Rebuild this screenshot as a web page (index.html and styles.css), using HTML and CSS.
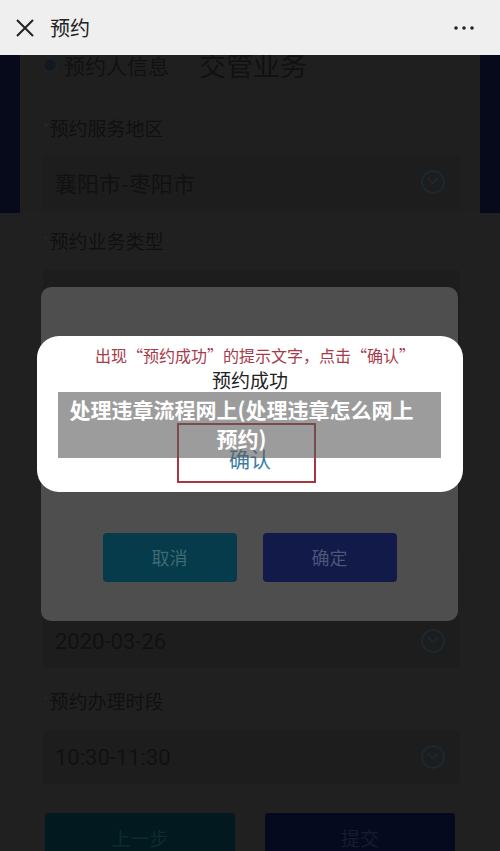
FILE: index.html
```html
<!DOCTYPE html>
<html lang="zh-CN">
<head>
  <meta charset="UTF-8" />
  <title>预约</title>
  <link rel="stylesheet" href="styles.css">
</head>
<body>

<div class="topbar">
  <svg class="close-icon" width="18" height="18" viewBox="0 0 18 18">
    <path d="M1 1 L17 17 M17 1 L1 17" stroke="#222" stroke-width="2" fill="none" />
  </svg>
  <span class="title">预约</span>
  <svg class="more-icon" width="22" height="6" viewBox="0 0 22 6">
    <circle cx="3" cy="3" r="1.8" fill="#222" />
    <circle cx="11" cy="3" r="1.8" fill="#222" />
    <circle cx="19" cy="3" r="1.8" fill="#222" />
  </svg>
</div>

<div class="shot">
  <div class="framed">
    <div class="tabs">
      <span class="radio"></span>
      <span class="tab">预约人信息</span>
      <span class="tab tab-big">交管业务</span>
    </div>

    <div class="label first"><i>*</i>预约服务地区</div>
    <div class="field">
      <span>襄阳市-枣阳市</span>
      <span class="chev"></span>
    </div>
  </div>

  <div class="lower">
    <div class="label second"><i>*</i>预约业务类型</div>
    <div class="field field-tall"></div>

    <div class="label"><i>*</i>预约日期</div>
    <div class="field">
      <span class="num">2020-03-26</span>
      <span class="chev"></span>
    </div>

    <div class="label"><i>*</i>预约办理时段</div>
    <div class="field">
      <span class="num">10:30-11:30</span>
      <span class="chev"></span>
    </div>

    <div class="steps">
      <div class="step prev">上一步</div>
      <div class="step submit">提交</div>
    </div>
  </div>

  <!-- dimmed confirm dialog from the original screen -->
  <div class="dialog">
    <div class="dialog-actions">
      <div class="dbtn cancel">取消</div>
      <div class="dbtn ok">确定</div>
    </div>
  </div>

  <!-- white popup pasted on top -->
  <div class="notice">
    <div class="hint">出现“预约成功”的提示文字，点击“确认”</div>
    <div class="success">预约成功</div>
    <div class="confirm-box">确认</div>
  </div>

  <div class="caption">处理违章流程网上(处理违章怎么网上预约)</div>
</div>

</body>
</html>
```

FILE: styles.css
```css
body {
  margin: 0;
  font-family: "Noto Sans CJK SC", "Noto Sans", sans-serif;
  background: #202020;
}

.topbar {
  height: 55px;
  background: #efefef;
  display: flex;
  align-items: center;
  padding: 0 25px 0 16px;
}

.close-icon {
  display: block;
}

.title {
  margin-left: 16px;
  font-size: 20px;
  color: #222;
  line-height: 1;
}

.more-icon {
  margin-left: auto;
  display: block;
}

.shot {
  position: relative;
  height: 796px;
  overflow: hidden;
  background: #202020;
}

.framed {
  border-left: 20px solid #060a1b;
  border-right: 20px solid #060a1b;
  height: 160px;
  background: #1f1f1f;
}

.lower {
  padding: 0 20px;
}

.tabs {
  display: flex;
  align-items: center;
  height: 24px;
  margin-top: -2px;
  padding-left: 23px;
}

.radio {
  width: 12px;
  height: 12px;
  border-radius: 50%;
  border: 1px solid #1b2833;
  background: #15191d;
  margin-right: 7px;
}

.tab {
  font-size: 21px;
  color: #111;
  line-height: 24px;
}

.tab-big {
  font-size: 27px;
  margin-left: 30px;
}

.label {
  padding: 22px 0 18px 23px;
  font-size: 19px;
  line-height: 22px;
  color: #101010;
}

.label i {
  font-style: normal;
  font-size: 12px;
  color: #3a2222;
  margin-right: 1px;
  vertical-align: top;
}

.label.first {
  padding-top: 40px;
  padding-bottom: 16px;
}

.label.second {
  padding-top: 17px;
}

.field {
  height: 54px;
  margin: 0 20px 0 23px;
  padding: 0 15px 0 12px;
  display: flex;
  align-items: center;
  justify-content: space-between;
  background: #1d1d1d;
  border-radius: 4px;
  font-size: 22px;
  color: #111;
}

.field .num {
  font-family: Roboto, "Noto Sans", sans-serif;
}

.field-tall {
  height: 282px;
}

.chev {
  width: 20px;
  height: 20px;
  border: 2px solid #1b2831;
  border-radius: 50%;
  position: relative;
}

.chev::after {
  content: "";
  position: absolute;
  left: 6px;
  top: 3px;
  width: 6px;
  height: 6px;
  border-right: 2px solid #1b2831;
  border-bottom: 2px solid #1b2831;
  transform: rotate(45deg);
}

.steps {
  display: flex;
  gap: 30px;
  margin: 29px 25px 0;
}

.step {
  flex: 1;
  height: 50px;
  border-radius: 3px;
  text-align: center;
  line-height: 50px;
  font-size: 19px;
}

.step.prev {
  background: #021a1f;
  color: #0e2a2f;
}

.step.submit {
  background: #050a1e;
  color: #171b2e;
}

.dialog {
  position: absolute;
  left: 41px;
  top: 232px;
  width: 417px;
  height: 334px;
  background: #4e4e4e;
  border-radius: 10px;
  display: flex;
  flex-direction: column;
}

.dialog-actions {
  margin-top: auto;
  padding-bottom: 39px;
  display: flex;
  justify-content: center;
  gap: 26px;
}

.dbtn {
  width: 134px;
  height: 49px;
  border-radius: 4px;
  text-align: center;
  line-height: 49px;
  font-size: 18px;
}

.dbtn.cancel {
  background: #053b4a;
  color: #3f6a74;
}

.dbtn.ok {
  background: #111a48;
  color: #4d5579;
}

.notice {
  position: absolute;
  left: 37px;
  top: 281px;
  width: 426px;
  height: 156px;
  background: #fff;
  border-radius: 22px;
  display: flex;
  flex-direction: column;
}

.hint {
  margin-top: 8px;
  padding-left: 10px;
  text-align: center;
  font-size: 16px;
  line-height: 22px;
  color: #a63a4b;
}

.success {
  margin-top: 2px;
  text-align: center;
  font-size: 19px;
  line-height: 24px;
  color: #222;
}

.confirm-box {
  margin: 31px 0 0 140px;
  width: 128px;
  height: 56px;
  padding-left: 7px;
  border: 2px solid #a8363f;
  text-align: center;
  font-size: 21px;
  line-height: 66px;
  overflow: hidden;
  color: #3b7da4;
}

.caption {
  position: absolute;
  left: 58px;
  top: 337px;
  width: 351px;
  padding: 3px 24px 5px 8px;
  background: rgba(90, 90, 90, 0.6);
  color: #fff;
  font-weight: bold;
  font-size: 21px;
  line-height: 29px;
  text-align: center;
}
```
